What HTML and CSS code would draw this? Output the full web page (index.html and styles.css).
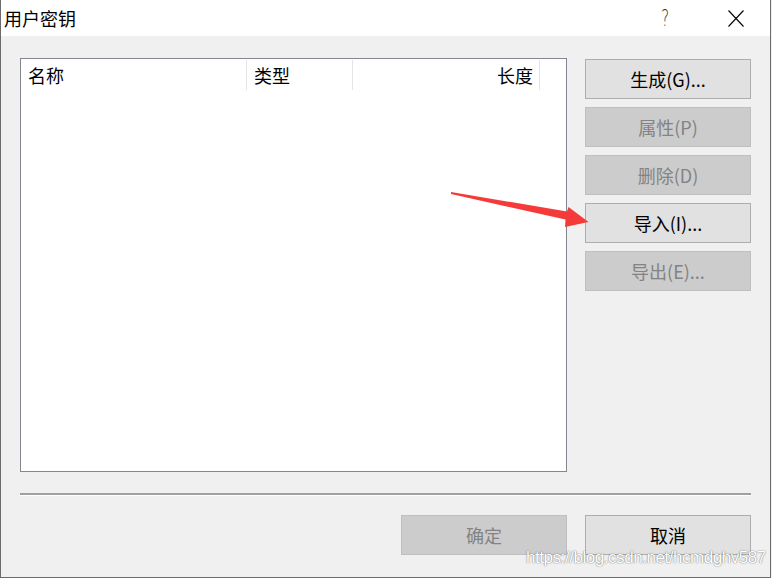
FILE: index.html
```html
<!DOCTYPE html>
<html lang="zh-CN">
<head>
<meta charset="utf-8">
<title>用户密钥</title>
<link rel="stylesheet" href="styles.css">
</head>
<body>
<div class="window">
  <div class="titlebar">
    <span class="title">用户密钥</span>
    <span class="help">?</span>
    <span class="close">
      <svg width="16" height="17" viewBox="0 0 16 17"><path d="M0.5 0.5 L15.5 16.5 M15.5 0.5 L0.5 16.5" stroke="#000" stroke-width="1.1" fill="none"/></svg>
    </span>
  </div>
  <div class="content">
    <div class="main">
      <div class="listbox">
        <div class="header">
          <div class="col col-name">名称</div>
          <div class="col col-type">类型</div>
          <div class="col col-len">长度</div>
        </div>
      </div>
      <div class="side">
        <button class="btn">生成(G)...</button>
        <button class="btn disabled">属性(P)</button>
        <button class="btn disabled">删除(D)</button>
        <button class="btn">导入(I)...</button>
        <button class="btn disabled">导出(E)...</button>
      </div>
    </div>
    <div class="separator"></div>
    <div class="footer">
      <button class="btn disabled">确定</button>
      <button class="btn">取消</button>
    </div>
  </div>
  <svg class="arrow" width="772" height="578" viewBox="0 0 772 578">
    <polygon points="451,192 567,211.5 568.5,207 588.5,222 565,227 565.5,219.5 451,194" fill="#f53a3a"/>
  </svg>
  <div class="watermark">https://blog.csdn.net/hcmdghv587</div>
</div>
</body>
</html>
```
FILE: styles.css
```css
* { box-sizing: border-box; }
html, body {
  margin: 0;
  padding: 0;
  background: #f0f0f0;
}
body {
  font-family: "Noto Sans CJK SC", "Noto Sans", sans-serif;
  font-size: 18px;
  color: #000;
}
.window {
  position: relative;
  width: 771px;
  height: 578px;
  background: #f0f0f0;
  border-left: 1px solid #6b6b6b;
  border-right: 1px solid #6b6b6b;
  border-bottom: 1px solid #6b6b6b;
  overflow: hidden;
}
.titlebar {
  height: 36px;
  background: #fff;
  display: flex;
  align-items: center;
  position: relative;
}
.title {
  margin-left: 3px;
  font-size: 18px;
  line-height: 36px;
}
.help {
  position: absolute;
  left: 658px;
  top: 0;
  line-height: 36px;
  font-size: 23px;
  font-family: "DejaVu Sans", sans-serif;
  font-weight: 200;
  color: #333;
  transform: scaleX(0.65);
}
.close {
  position: absolute;
  left: 727px;
  top: 10px;
  display: block;
  width: 16px;
  height: 17px;
}
.close svg { display: block; }
.content {
  padding: 22px 19px 0 19px;
}
.main {
  display: flex;
  gap: 18px;
}
.listbox {
  width: 547px;
  height: 414px;
  background: #fff;
  border: 1px solid #828790;
}
.header {
  display: flex;
  height: 31px;
  padding-top: 1px;
}
.col {
  height: 30px;
  line-height: 30px;
  font-size: 18px;
  border-right: 1px solid #e5e5e5;
  padding-left: 7px;
  white-space: nowrap;
}
.col-name { width: 226px; }
.col-type { width: 106px; }
.col-len { width: 187px; text-align: right; padding-right: 6px; }
.side {
  display: flex;
  flex-direction: column;
  gap: 8px;
  padding-top: 1px;
}
.btn {
  width: 166px;
  height: 40px;
  background: #e1e1e1;
  border: 1px solid #adadad;
  font-family: "Noto Sans CJK SC", "Noto Sans", sans-serif;
  font-size: 18px;
  color: #000;
  padding: 0;
  margin: 0;
  line-height: 38px;
}
.btn.disabled {
  background: #cccccc;
  border-color: #bfbfbf;
  color: #838383;
}
.separator {
  margin-top: 21px;
  height: 2px;
  border-top: 1px solid #a0a0a0;
  border-bottom: 1px solid #a0a0a0;
  width: 731px;
  box-shadow: 0 1px 0 #fff;
}
.footer {
  display: flex;
  justify-content: flex-end;
  gap: 18px;
  margin-top: 20px;
}
.arrow {
  position: absolute;
  left: -1px;
  top: 0;
  pointer-events: none;
}
.watermark {
  position: absolute;
  left: 525px;
  top: 548px;
  font-family: "Liberation Sans", Arial, sans-serif;
  font-size: 17px;
  letter-spacing: -0.45px;
  color: #fff;
  text-shadow: 0 0 1px rgba(0,0,0,0.55), 0 0 2px rgba(0,0,0,0.25);
  white-space: nowrap;
}
```
